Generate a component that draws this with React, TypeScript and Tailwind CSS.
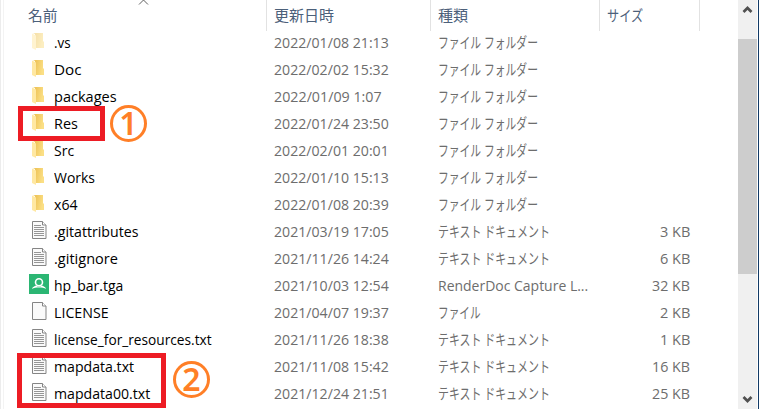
import { useLayoutEffect, useRef, useState } from "react";

type Kind = "folder" | "hidden" | "text" | "blank" | "capture";
type Entry = [Kind, string, number, string, string, string];

const FOLDER = "ファイル フォルダー";
const TEXT = "テキスト ドキュメント";

const entries: Entry[] = [
  ["hidden", ".vs", 17, "2022/01/08 21:13", FOLDER, ""],
  ["folder", "Doc", 27.5, "2022/02/02 15:32", FOLDER, ""],
  ["folder", "packages", 63, "2022/01/09 1:07", FOLDER, ""],
  ["folder", "Res", 24, "2022/01/24 23:50", FOLDER, ""],
  ["folder", "Src", 20.5, "2022/02/01 20:01", FOLDER, ""],
  ["folder", "Works", 41, "2022/01/10 15:13", FOLDER, ""],
  ["folder", "x64", 23.5, "2022/01/08 20:39", FOLDER, ""],
  ["text", ".gitattributes", 84, "2021/03/19 17:05", TEXT, "3 KB"],
  ["text", ".gitignore", 64, "2021/11/26 14:24", TEXT, "6 KB"],
  ["capture", "hp_bar.tga", 69, "2021/10/03 12:54", "RenderDoc Capture L...", "32 KB"],
  ["blank", "LICENSE", 55, "2021/04/07 19:37", "ファイル", "2 KB"],
  ["text", "license_for_resources.txt", 158, "2021/11/26 18:38", TEXT, "1 KB"],
  ["text", "mapdata.txt", 80, "2021/11/08 15:42", TEXT, "16 KB"],
  ["text", "mapdata00.txt", 96, "2021/12/24 21:51", TEXT, "25 KB"],
];

const typeWidth: Record<string, number> = {
  [FOLDER]: 100,
  [TEXT]: 111.5,
  "ファイル": 42.5,
  "RenderDoc Capture L...": 150,
};

/** Text condensed horizontally to a given width. */
function Fit({ text, width, right = false }: { text: string; width: number; right?: boolean }) {
  const ref = useRef<HTMLSpanElement>(null);
  const [scale, setScale] = useState(1);
  useLayoutEffect(() => {
    if (ref.current) setScale(width / ref.current.offsetWidth);
  }, [text, width]);
  return (
    <span
      ref={ref}
      className={`inline-block whitespace-nowrap ${right ? "origin-right" : "origin-left"}`}
      style={{ transform: `scaleX(${scale})` }}
    >
      {text}
    </span>
  );
}

function Icon({ kind }: { kind: Kind }) {
  if (kind === "capture")
    return (
      <svg className="mt-[2px] -ml-[3px] h-5 w-5" viewBox="0 0 20 20">
        <path fill="#2bb673" d="M0 0h20v20H0z" />
        <circle cx="10" cy="8.300" r="3.500" fill="none" stroke="#fff" strokeWidth="1.600" />
        <path d="M2.800 14.800c1.400-2.300 3.200-3 4.700-3.300l1 .9h3l1-.9c1.500.3 3.300 1 4.700 3.300-4-1.600-10.400-1.600-14.400 0z" fill="#fff" />
      </svg>
    );
  if (kind === "folder" || kind === "hidden")
    return (
      <svg className={`mt-[4px] h-[18px] w-[14px] ${kind === "hidden" ? "opacity-50" : ""}`} viewBox="0 0 14 18">
        <defs>
          <linearGradient id={`back-${kind}`} x1="0" y1="0" x2="1" y2="0.3">
            <stop offset="0.3" stopColor="#efc65c" />
            <stop offset="1" stopColor="#fbdf85" />
          </linearGradient>
        </defs>
        <path d="M1 0h10v8l1 1v6H3V1z" fill={`url(#back-${kind})`} />
        <path d="M0 .5 4 2.600V17L0 15z" fill="#ffe8a2" />
      </svg>
    );
  return (
    <svg className="mt-[3px] h-[18px] w-[15px]" viewBox="0 0 15 18">
      <path d="M.5.5h10l3.500 3.500v13.500H.5z" fill="#fafafa" stroke="#858585" />
      <path d="M10.500.5V4H14" fill="#fff" stroke="#858585" />
      {kind === "text" && (
        <path d="M2 4.500h7M2 6.500h10M2 8.500h10M2 10.500h10M2 12.500h10M2 14.500h10" stroke="#969696" />
      )}
    </svg>
  );
}

function Header({ text, width, className }: { text: string; width: number; className: string }) {
  return (
    <div className={`h-[31px] shrink-0 border-r border-[#e2e2e2] leading-[31px] ${className}`}>
      <Fit text={text} width={width} />
    </div>
  );
}

function Mark({ digit, className }: { digit: string; className: string }) {
  return (
    <div
      className={`absolute flex h-[37px] w-[37px] items-center justify-center rounded-full border-3 border-[#ff7f27] font-['Noto_Sans'] text-[32px] leading-none font-semibold text-[#ff7f27] ${className}`}
    >
      <span className="-mt-px">{digit}</span>
    </div>
  );
}

export default function App() {
  return (
    <div className="relative flex h-[409px] w-[759px] overflow-hidden bg-white font-['Open_Sans','Noto_Sans_CJK_JP',sans-serif] text-[15px] text-[#6d6d6d]">
      <div className="w-1 shrink-0 border-r border-l border-r-[#f3f3f3] border-l-[#ececec]" />
      <main className="w-[734px] shrink-0">
        <div className="flex h-[29px] text-[#4c607a]">
          <Header text="名前" width={29.5} className="w-[263px] pl-6" />
          <Header text="更新日時" width={60} className="w-[164px] pl-[7px]" />
          <Header text="種類" width={30} className="w-[169px] pl-[7px]" />
          <Header text="サイズ" width={36.5} className="w-[100px] pl-[7px]" />
        </div>
        {entries.map(([kind, name, width, date, type, size]) => (
          <div key={name} className="flex h-[27px] leading-[27px]">
            <div className="flex w-[270px] shrink-0 pl-7">
              <div className="w-[22px] shrink-0">
                <Icon kind={kind} />
              </div>
              <div className="text-black">
                <Fit text={name} width={width} />
              </div>
            </div>
            <div className="w-[164px] shrink-0">
              <Fit text={date} width={date.length === 16 ? 115 : 107.5} />
            </div>
            <div className="w-[160px] shrink-0">
              <Fit text={type} width={typeWidth[type]} />
            </div>
            <div className="w-[92px] shrink-0 text-right">
              {size && <Fit text={size} width={size.length === 5 ? 38 : 30} right />}
            </div>
          </div>
        ))}
      </main>
      <aside className="flex w-[19px] shrink-0 flex-col items-center bg-[#f0f0f0]">
        <svg className="h-[39px] w-[19px] shrink-0" viewBox="0 0 19 39">
          <path d="m5.500 12 4-4 4 4" fill="none" stroke="#505050" strokeWidth="2.700" />
        </svg>
        <div className="h-[235px] w-full shrink-0 bg-[#cdcdcd]" />
        <svg className="mt-auto h-[19px] w-[19px] shrink-0" viewBox="0 0 19 19">
          <path d="m5.500 7 4 4 4-4" fill="none" stroke="#505050" strokeWidth="2.700" />
        </svg>
      </aside>
      <div className="w-px shrink-0 bg-white" />
      <div className="w-px shrink-0 bg-[#123a66]" />
      <svg className="absolute top-0 left-[138px] h-[5px] w-[11px]" viewBox="0 0 11 5">
        <path d="M1 4.500 5.500 0 10 4.500" fill="none" stroke="#606060" />
      </svg>
      <div className="absolute top-[106px] left-[18px] h-[35px] w-[87px] border-5 border-[#ed1c24]" />
      <div className="absolute top-[353px] left-[17px] h-[55px] w-[149px] border-5 border-[#ed1c24]" />
      <Mark digit="1" className="top-[105px] left-[110px]" />
      <Mark digit="2" className="top-[361px] left-[173px]" />
    </div>
  );
}
